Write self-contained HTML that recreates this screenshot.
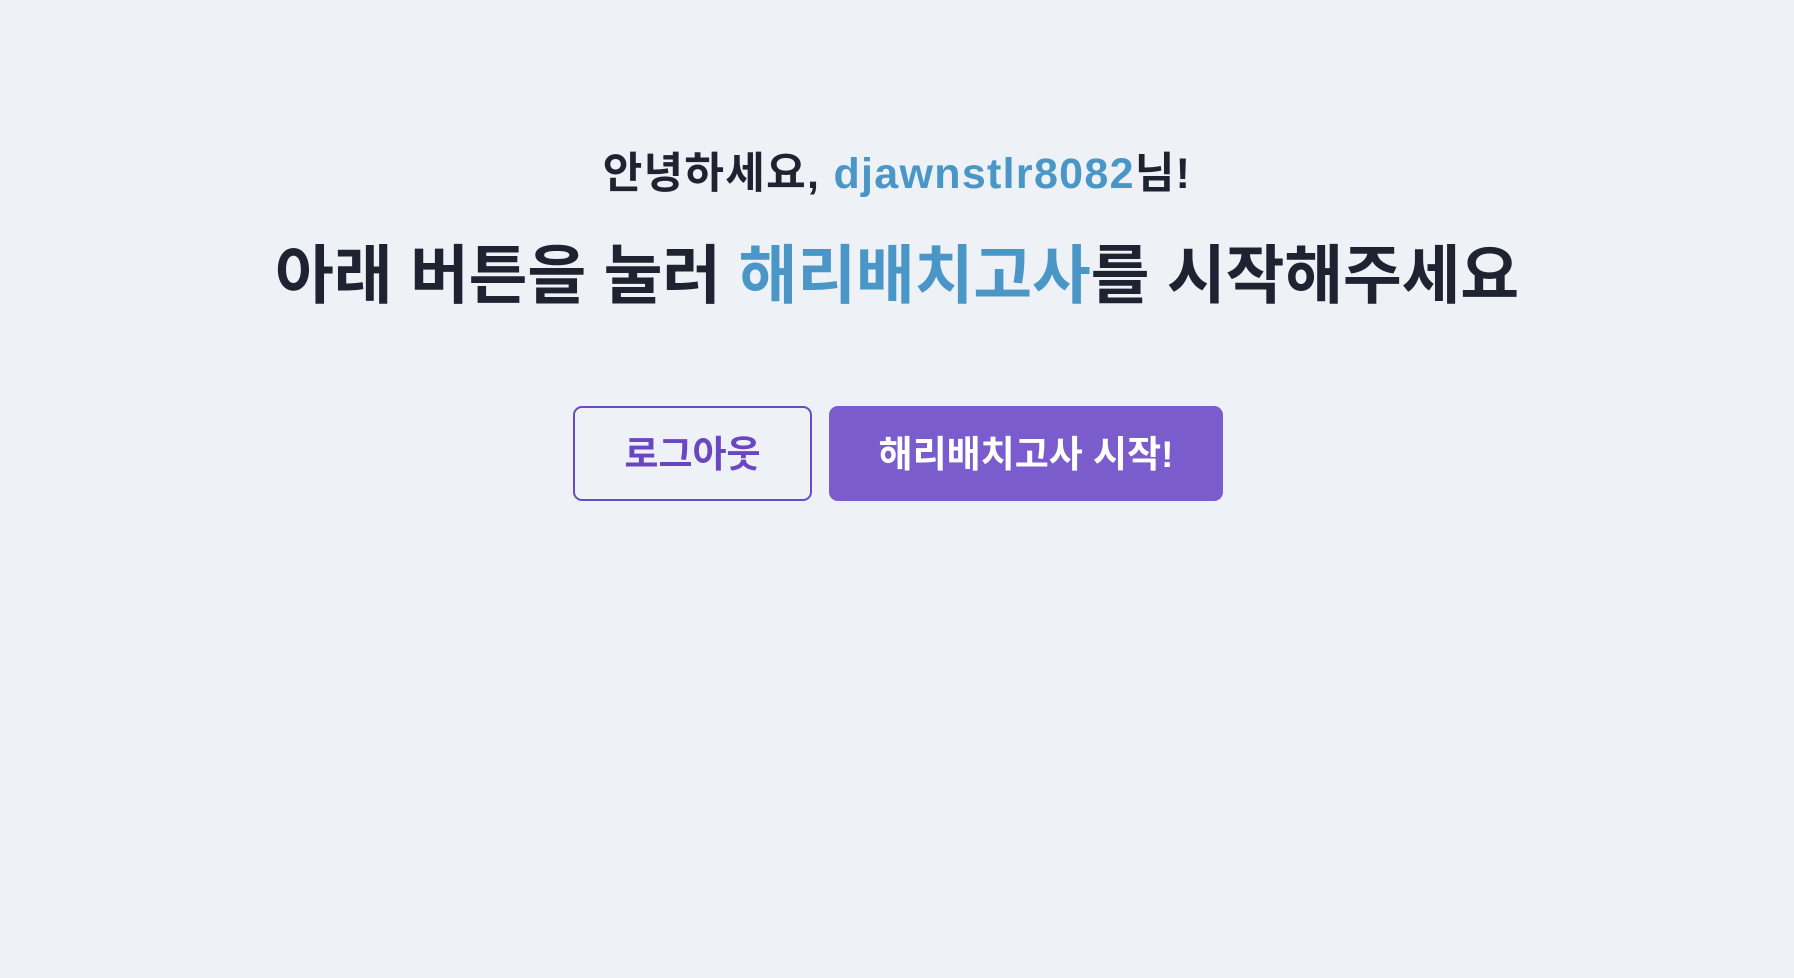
<!DOCTYPE html>
<html><head><meta charset="utf-8"><style>
html,body{margin:0;padding:0;width:1794px;height:978px;background:#eef1f6;overflow:hidden;}
body{font-family:"Liberation Sans","Noto Sans CJK KR","NanumGothic",sans-serif;color:#1f2230;}
.g{position:absolute;left:0;width:1794px;top:146px;text-align:center;font-size:43px;font-weight:700;line-height:56px;letter-spacing:1.3px;}
.h{position:absolute;left:0;width:1794px;top:234px;text-align:center;font-size:64px;font-weight:700;line-height:84px;letter-spacing:-0.2px;}
.b{color:#4a97c7;}
.btn{position:absolute;top:406px;height:95px;box-sizing:border-box;border-radius:9px;display:flex;align-items:center;justify-content:center;font-size:37px;font-weight:700;letter-spacing:0px;padding-bottom:6px;}
.l{left:573px;width:239px;border:2px solid #6a4bc4;color:#6a47c0;background:#eef1f6;}
.s{left:829px;width:394px;background:#7a5ccc;color:#fff;}
</style></head><body>
<div class="g">안녕하세요, <span class="b">djawnstlr8082</span>님!</div>
<div class="h">아래 버튼을 눌러 <span class="b">해리배치고사</span>를 시작해주세요</div>
<div class="btn l">로그아웃</div>
<div class="btn s">해리배치고사 시작!</div>
</body></html>
